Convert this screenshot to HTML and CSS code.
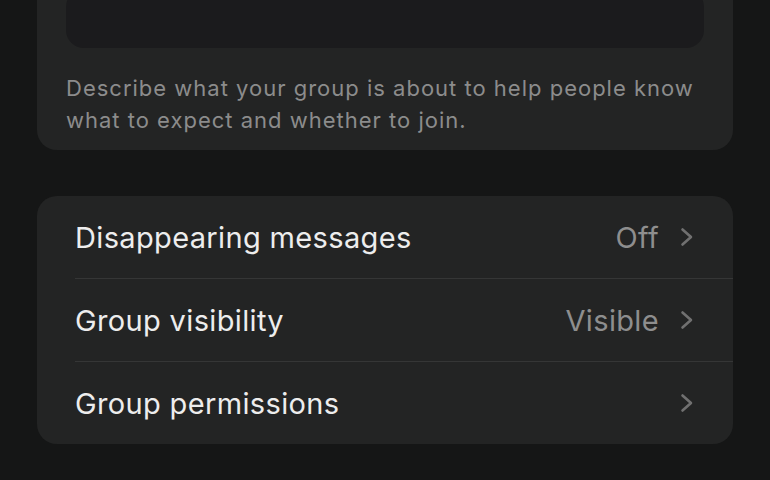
FILE: index.html
```html
<!DOCTYPE html>
<html lang="en">
  <head>
    <meta charset="UTF-8" />
    <meta name="viewport" content="width=device-width, initial-scale=1.0" />
    <title>Group settings</title>
    <link rel="stylesheet" href="styles.css">
  </head>
  <body>
    <div class="page">
      <div class="card about-card">
        <div class="about-input"></div>
        <p class="about-hint">
          Describe what your group is about to help people know what to expect and whether to join.
        </p>
      </div>

      <div class="card settings-card">
        <div class="row">
          <span class="row-label">Disappearing messages</span>
          <span class="row-value">Off</span>
          <svg class="chevron" viewBox="0 0 14 20"><path d="M2.5 2.5 L11 10 L2.5 17.5" /></svg>
        </div>
        <div class="row">
          <span class="row-label">Group visibility</span>
          <span class="row-value">Visible</span>
          <svg class="chevron" viewBox="0 0 14 20"><path d="M2.5 2.5 L11 10 L2.5 17.5" /></svg>
        </div>
        <div class="row">
          <span class="row-label">Group permissions</span>
          <span class="row-value"></span>
          <svg class="chevron" viewBox="0 0 14 20"><path d="M2.5 2.5 L11 10 L2.5 17.5" /></svg>
        </div>
      </div>
    </div>
  </body>
</html>
```

FILE: styles.css
```css
body {
  margin: 0;
  background-color: #151616;
  font-family: Inter, "Noto Sans", sans-serif;
  overflow: hidden;
}
.page {
  padding: 0 37px;
  display: flex;
  flex-direction: column;
  gap: 46px;
}
.card {
  background-color: #232424;
  border-radius: 20px;
}
.about-card {
  margin-top: -40px;
  padding: 29px 29px 14px;
}
.about-input {
  height: 59px;
  background-color: #1b1b1d;
  border-radius: 18px;
}
.about-hint {
  margin: 24px 0 0;
  font-size: 22px;
  line-height: 32px;
  letter-spacing: 1px;
  color: #8c8c8c;
}
.settings-card {
  padding-left: 38px;
  overflow: hidden;
}
.row {
  display: flex;
  align-items: center;
  height: 82px;
  padding-right: 39px;
  border-bottom: 1px solid #353636;
}
.row:last-child {
  border-bottom: none;
}
.row-label {
  flex: 1;
  font-size: 29px;
  letter-spacing: 0.35px;
  color: #ededed;
}
.row-value {
  font-size: 29px;
  letter-spacing: 0.35px;
  color: #8e8e8e;
  margin-right: 21px;
}
.chevron {
  width: 14px;
  height: 20px;
  fill: none;
  stroke: #707070;
  stroke-width: 2.6;
  stroke-linecap: round;
  stroke-linejoin: round;
}
```
